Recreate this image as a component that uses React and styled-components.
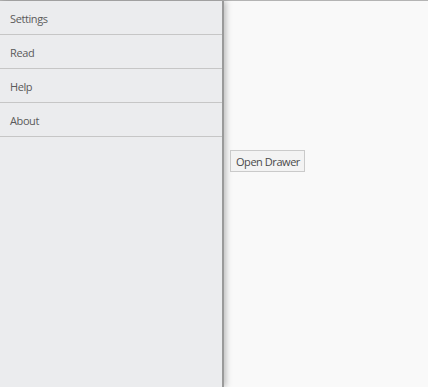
import React from 'react';
import styled, { createGlobalStyle } from 'styled-components';

const GlobalStyle = createGlobalStyle`
  html, body {
    margin: 0;
    padding: 0;
    height: 100%;
  }
  #root {
    height: 100%;
  }
  body {
    font-family: 'Open Sans', 'Liberation Sans', sans-serif;
    background: #f9f9f9;
  }
`;

const Page = styled.div`
  display: flex;
  height: 387px;
  border-top: 1px solid #b4b4b4;
  box-sizing: border-box;
  background: #f9f9f9;
`;

const Drawer = styled.nav`
  width: 222px;
  flex-shrink: 0;
  background: #ebecee;
  border-right: 2px solid #9a9a9a;
  box-shadow: 2px 0 6px rgba(0, 0, 0, 0.25);
  display: flex;
  flex-direction: column;
`;

const Item = styled.div`
  height: 33px;
  box-sizing: border-box;
  height: 34px;
  padding-top: 2px;
  border-bottom: 1px solid #c6c6c6;
  display: flex;
  align-items: center;
  padding-left: 10px;
  font-size: 11px;
  letter-spacing: -0.4px;
  color: #5a5a5a;
`;

const Main = styled.main`
  flex: 1;
  padding: 149px 0 0 6px;
`;

const Button = styled.button`
  display: block;
  font-family: 'Open Sans', 'Liberation Sans', sans-serif;
  font-size: 11px;
  letter-spacing: -0.45px;
  color: #4a4a4a;
  background: #f3f3f3;
  border: 1px solid #cacaca;
  border-radius: 0;
  padding: 0 4px 0 5px;
  height: 22px;
  cursor: pointer;
`;

const items = ['Settings', 'Read', 'Help', 'About'];

export default function App() {
  return (
    <>
      <GlobalStyle />
      <Page>
        <Drawer>
          {items.map(label => (
            <Item key={label}>{label}</Item>
          ))}
        </Drawer>
        <Main>
          <Button>Open Drawer</Button>
        </Main>
      </Page>
    </>
  );
}
